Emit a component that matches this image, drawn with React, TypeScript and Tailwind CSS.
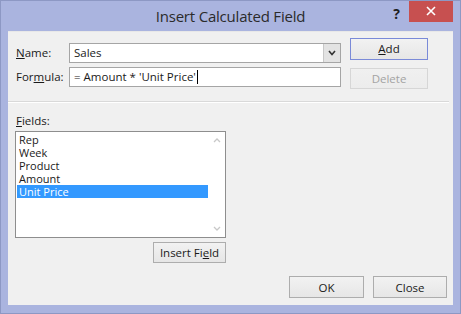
import React from "react";

const font = { fontFamily: '"Open Sans", "Noto Sans", Arial, sans-serif' };

function Btn({ children, className = "" }: { children: React.ReactNode; className?: string }) {
  return (
    <div
      className={`flex items-center justify-center border border-[#adadad] bg-gradient-to-b from-[#f2f2f2] to-[#e6e6e6] text-[11.5px] text-[#1a1a1a] ${className}`}
    >
      {children}
    </div>
  );
}

export default function App() {
  return (
    <div style={font} className="w-[461px] h-[314px] bg-[#aab4df] flex flex-col px-[7px] pb-[8px] border border-[#8d98c4] overflow-hidden">
      <div className="relative h-[30px] shrink-0 flex items-center justify-center">
        <span className="text-[15px] text-[#2b2b2b] mt-[1px] tracking-[-0.2px]">Insert Calculated Field</span>
        <span className="absolute right-[53px] top-[2px] text-[14px] font-bold text-[#1f1f1f]">?</span>
        <div className="absolute right-[0px] top-[-1px] w-[44px] h-[22px] bg-[#c75050] flex items-center justify-center">
          <svg width="10" height="10" viewBox="0 0 10 10">
            <path d="M1 1 L9 9 M9 1 L1 9" stroke="#fff" strokeWidth="1.6" />
          </svg>
        </div>
      </div>
      <div className="flex-1 bg-[#f0f0f0] flex flex-col border-t border-[#e8e8e8]">
        <div className="flex pl-[8px]">
          <div className="flex flex-col gap-[4px] mt-[11px]">
            <div className="flex items-center">
              <span className="w-[53px] text-[11.5px] text-[#1a1a1a]"><u>N</u>ame:</span>
              <div className="w-[272px] h-[20px] bg-white border border-[#a5a5a5] flex items-center">
                <span className="flex-1 pl-[4px] text-[11.5px] text-[#1a1a1a]">Sales</span>
                <div className="w-[17px] h-[18px] bg-[#e3e3e3] border-l border-[#c8c8c8] flex items-center justify-center">
                  <svg width="8" height="6" viewBox="0 0 8 6">
                    <path d="M1 1 L4 4.5 L7 1" stroke="#333" strokeWidth="1.6" fill="none" />
                  </svg>
                </div>
              </div>
            </div>
            <div className="flex items-center">
              <span className="w-[53px] text-[11.5px] text-[#1a1a1a]">For<u>m</u>ula:</span>
              <div className="w-[272px] h-[20px] bg-white border border-[#a5a5a5] flex items-center">
                <span className="pl-[4px] text-[11.5px] text-[#1a1a1a]">= Amount * 'Unit Price'</span>
                <span className="w-[1px] h-[14px] bg-black ml-[1px]" />
              </div>
            </div>
          </div>
          <div className="flex flex-col ml-[9px] mt-[6px] gap-[8px]">
            <Btn className="w-[78px] h-[22px] !border-[#7a8ad8]">
              <span><u>A</u>dd</span>
            </Btn>
            <Btn className="w-[78px] h-[21px] !border-[#d6d6d6] !from-[#f0f0f0] !to-[#ececec] !text-[#a3a3a3]">
              <span>Delete</span>
            </Btn>
          </div>
        </div>
        <div className="h-[1px] bg-[#d9d9d9] mt-[12px] mr-[4px] border-b border-white box-content" />
        <div className="pl-[8px] mt-[9px] text-[11.5px] text-[#1a1a1a]">
          <u>F</u>ields:
        </div>
        <div className="ml-[7px] mt-[2px] w-[211px] h-[107px] bg-white border border-[#8e8e8e] flex">
          <div className="flex-1 flex flex-col pt-[1px] pl-[1px] text-[11px] leading-[13px] text-[#1a1a1a]">
            <div className="pl-[2px] h-[13px]">Rep</div>
            <div className="pl-[2px] h-[13px]">Week</div>
            <div className="pl-[2px] h-[13px]">Product</div>
            <div className="pl-[2px] h-[13px]">Amount</div>
            <div className="pl-[2px] h-[13px] bg-[#3399ff] text-white">Unit Price</div>
          </div>
          <div className="w-[17px] flex flex-col items-center justify-between py-[6px]">
            <svg width="8" height="5" viewBox="0 0 8 5">
              <path d="M1 4 L4 1 L7 4" stroke="#c8c8c8" strokeWidth="1.3" fill="none" />
            </svg>
            <svg width="8" height="5" viewBox="0 0 8 5">
              <path d="M1 1 L4 4 L7 1" stroke="#c8c8c8" strokeWidth="1.3" fill="none" />
            </svg>
          </div>
        </div>
        <div className="flex ml-[145px] mt-[4px]">
          <Btn className="w-[73px] h-[21px]">
            <span>Insert Fi<u>e</u>ld</span>
          </Btn>
        </div>
        <div className="flex justify-end gap-[9px] mt-[13px] mr-[6px]">
          <Btn className="w-[75px] h-[22px]">OK</Btn>
          <Btn className="w-[74px] h-[22px]">Close</Btn>
        </div>
      </div>
    </div>
  );
}
